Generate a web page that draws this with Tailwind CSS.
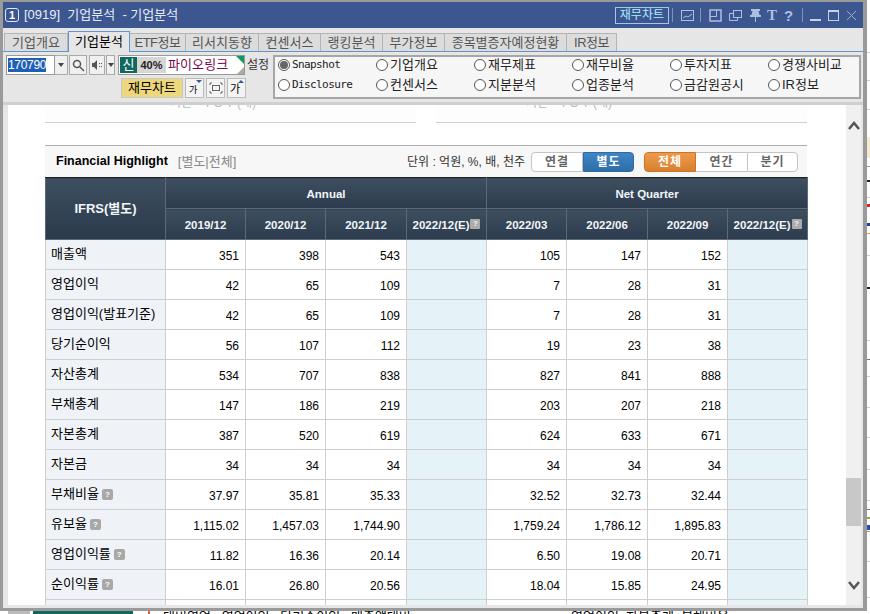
<!DOCTYPE html>
<html lang="ko">
<head>
    <meta charset="UTF-8">
    <title>기업분석</title>
    <script src="https://cdn.jsdelivr.net/npm/@tailwindcss/browser@4"></script>
</head>
<body class="relative w-[870px] h-[614px] overflow-hidden bg-white font-['Liberation_Sans','Noto_Sans_CJK_KR',sans-serif] text-[12px] text-black">
    <!-- bits of the desktop behind the window -->
    <div class="absolute left-[867px] top-0 w-[3px] h-[611px]">
        <span class="absolute left-0 top-[52px] w-[3px] h-px bg-[#ccc]"></span>
        <span class="absolute left-0 top-[80px] w-[3px] h-px bg-[#ccc]"></span>
        <span class="absolute left-0 top-[109px] w-[3px] h-px bg-[#ccc]"></span>
        <span class="absolute left-0 top-[137px] w-[3px] h-[21px] bg-[#f8e8d0]"></span>
        <span class="absolute left-0 top-[166px] w-[3px] h-px bg-[#999]"></span>
        <span class="absolute left-0 top-[180px] w-[3px] h-[2px] bg-[#222]"></span>
        <span class="absolute left-0 top-[197px] w-[3px] h-px bg-[#ccc]"></span>
        <span class="absolute left-0 top-[204px] w-[3px] h-[3px] bg-[#e02020]"></span>
        <span class="absolute left-0 top-[223px] w-[3px] h-[3px] bg-[#2040a0]"></span>
        <span class="absolute left-0 top-[233px] w-[3px] h-px bg-[#e8a020]"></span>
        <span class="absolute left-0 top-[255px] w-[3px] h-px bg-[#ccc]"></span>
        <span class="absolute left-0 top-[287px] w-[3px] h-[2px] bg-[#222]"></span>
        <span class="absolute left-0 top-[340px] w-[3px] h-px bg-[#ccc]"></span>
        <span class="absolute left-0 top-[359px] w-[3px] h-px bg-[#777]"></span>
        <span class="absolute left-0 top-[376px] w-[3px] h-px bg-[#ccc]"></span>
        <span class="absolute left-0 top-[407px] w-[3px] h-px bg-[#ccc]"></span>
        <span class="absolute left-0 top-[437px] w-[3px] h-px bg-[#ccc]"></span>
        <span class="absolute left-0 top-[469px] w-[3px] h-px bg-[#ccc]"></span>
        <span class="absolute left-0 top-[500px] w-[3px] h-px bg-[#ccc]"></span>
        <span class="absolute left-0 top-[509px] w-[3px] h-px bg-[#777]"></span>
        <span class="absolute left-0 top-[517px] w-[3px] h-[2px] bg-[#8fb020]"></span>
        <span class="absolute left-0 top-[525px] w-[3px] h-[5px] bg-[#2050b0]"></span>
        <span class="absolute left-0 top-[531px] w-[3px] h-px bg-[#999]"></span>
        <span class="absolute left-0 top-[561px] w-[3px] h-px bg-[#ccc]"></span>
        <span class="absolute left-0 top-[597px] w-[3px] h-px bg-[#ccc]"></span>
    </div>
    <div class="absolute left-0 top-[611px] w-[870px] h-[3px] overflow-hidden">
        <span class="absolute left-[8px] top-0 w-[22px] h-[3px] bg-[#bbb]"></span>
        <span class="absolute left-[33px] top-0 w-[100px] h-[3px] bg-[#11685f]"></span>
        <span class="absolute left-[148px] top-0 w-[2px] h-[3px] bg-[#e8602c]"></span>
        <span class="absolute left-[163px] -top-[1px] text-[13px] leading-[13px] whitespace-nowrap">대비영업 &nbsp; 영업이익 &nbsp; 당기순이익 &nbsp; 매출액대비</span>
        <span class="absolute left-[571px] -top-[1px] text-[13px] leading-[13px] whitespace-nowrap">영업이익 &nbsp;자본총계 &nbsp;부채비율</span>
    </div>

    <!-- window -->
    <div class="relative z-10 w-[867px] h-[611px] border-[3px] border-t-[2px] border-r-[4px] border-[#9a9a9a] flex flex-col bg-[#e6e6e6] overflow-hidden">
        <!-- title bar -->
        <div class="h-[26px] shrink-0 bg-[#3c5690] flex items-center pl-[2px] pr-[4px] text-white">
            <span class="w-[14px] h-[14px] rounded-[3px] border border-[#dfe6f5] text-[11px] leading-[12px] font-bold text-center">1</span>
            <span class="ml-[5px] text-[13px] text-[#e8edf8]">[0919]&nbsp; 기업분석 &nbsp;-&nbsp;기업분석</span>
            <div class="ml-auto flex items-center text-[#aebfdf]">
                <span class="h-[17px] px-[4px] border border-[#a9c4e4] text-[#a9f0ff] text-[12px] leading-[15px]">재무차트</span>
                <span class="ml-[3px] w-px h-[14px] bg-[#7f92ba]"></span>
                <svg class="ml-[8px]" width="13" height="13" viewBox="0 0 13 13" fill="none" stroke="currentColor"><rect x="0.500" y="1.500" width="12" height="10"/><path d="M2 9l3-2 2 1 4-3"/></svg>
                <span class="ml-[6px] w-px h-[14px] bg-[#7f92ba]"></span>
                <svg class="ml-[8px]" width="13" height="13" viewBox="0 0 13 13" fill="none" stroke="currentColor"><rect x="1" y="1" width="11" height="11" stroke-width="1.500"/><path d="M1 7.500h6.500V1"/></svg>
                <svg class="ml-[7px]" width="13" height="13" viewBox="0 0 13 13" fill="none" stroke="currentColor"><rect x="4.500" y="1.500" width="8" height="7"/><path d="M4 4.500H.5v7h8V9"/></svg>
                <svg class="ml-[7px]" width="13" height="14" viewBox="0 0 13 14" fill="currentColor"><path d="M2 1h9v2H9.500l1 4H12v2H7v5H6V9H1V7h1.500l1-4H2z"/></svg>
                <span class="ml-[5px] w-[11px] text-[15px] leading-[15px] font-bold font-['Liberation_Serif',serif]">T</span>
                <span class="ml-[6px] w-[10px] text-[15px] leading-[15px] font-bold">?</span>
                <span class="ml-[8px] w-px h-[14px] bg-[#7f92ba]"></span>
                <span class="ml-[7px] mt-[10px] w-[11px] h-[2px] bg-[#c6d2ea]"></span>
                <span class="ml-[7px] w-[11px] h-[11px] border border-t-[2px] border-[#c6d2ea]"></span>
                <svg class="ml-[8px] mr-[3px]" width="9" height="9" viewBox="0 0 9 9" stroke="#9db0d4"><path d="M0 0l9 9M9 0l-9 9"/></svg>
            </div>
        </div>

        <!-- tabs -->
        <div class="h-[24px] shrink-0 pt-[5px] flex pl-[1px] border-b border-[#5f96d0] text-[#555] text-[13px]">
            <span class="w-[64px] border border-b-0 border-[#b4b4b4] bg-[#dcdcdc] text-center leading-[17px]">기업개요</span>
            <span class="w-[62px] -mt-[2px] h-[21px] border border-b-0 border-[#5f96d0] bg-[#e6e6e6] text-black text-center leading-[20px] z-10">기업분석</span>
            <span class="w-[56px] border border-b-0 border-l-0 border-[#b4b4b4] bg-[#dcdcdc] text-center leading-[17px] tracking-[-0.5px]">ETF정보</span>
            <span class="w-[73px] border border-b-0 border-l-0 border-[#b4b4b4] bg-[#dcdcdc] text-center leading-[17px]">리서치동향</span>
            <span class="w-[62px] border border-b-0 border-l-0 border-[#b4b4b4] bg-[#dcdcdc] text-center leading-[17px]">컨센서스</span>
            <span class="w-[62px] border border-b-0 border-l-0 border-[#b4b4b4] bg-[#dcdcdc] text-center leading-[17px]">랭킹분석</span>
            <span class="w-[62px] border border-b-0 border-l-0 border-[#b4b4b4] bg-[#dcdcdc] text-center leading-[17px]">부가정보</span>
            <span class="w-[122px] border border-b-0 border-l-0 border-[#b4b4b4] bg-[#dcdcdc] text-center leading-[17px]">종목별증자예정현황</span>
            <span class="w-[50px] border border-b-0 border-l-0 border-[#b4b4b4] bg-[#dcdcdc] text-center leading-[17px] tracking-[-0.5px]">IR정보</span>
        </div>

        <!-- toolbar -->
        <div class="h-[53px] shrink-0 flex pl-[3px] pt-[3px] border-b-[3px] border-[#cfcfcf]">
            <div class="w-[264px] shrink-0">
                <div class="flex items-center h-[20px]">
                    <div class="w-[49px] h-[20px] bg-white border border-[#999] flex items-center pl-px"><span class="bg-[#1f5fb8] text-white leading-[14px] tracking-[-0.3px]">170790</span></div>
                    <span class="w-[13px] h-[20px] border border-l-0 border-[#aaa] bg-[#f0f0f0] flex items-center justify-center"><span class="border-x-[3px] border-t-[4px] border-x-transparent border-t-[#444]"></span></span>
                    <span class="ml-px w-[18px] h-[20px] border border-[#aaa] bg-[#f0f0f0] flex items-center justify-center">
                        <svg width="13" height="13" viewBox="0 0 13 13" fill="none" stroke="#555" stroke-width="1.500"><circle cx="5" cy="5" r="3.500"/><path d="M8 8l4 4"/></svg>
                    </span>
                    <span class="ml-[2px] w-[16px] h-[20px] border border-[#aaa] bg-[#f0f0f0] flex items-center justify-center">
                        <svg width="12" height="12" viewBox="0 0 12 12" fill="#555"><path d="M1 4h2l3-3v10L3 8H1z"/><path d="M8 4h1v1H8zM10 4h1v1h-1zM8 7h1v1H8zM10 7h1v1h-1z"/></svg>
                    </span>
                    <span class="ml-px w-[9px] h-[20px] border border-[#aaa] bg-[#f0f0f0] flex items-center justify-center"><span class="border-x-[3px] border-t-[4px] border-x-transparent border-t-[#444]"></span></span>
                    <div class="ml-[3px] w-[127px] h-[20px] border border-[#999] bg-white flex items-center relative">
                        <span class="w-[17px] h-[16px] ml-px bg-[#11685f] text-white text-center text-[13px] leading-[15px]">신</span>
                        <span class="w-[29px] h-[16px] bg-[#d6d6d6] text-center leading-[16px] font-bold text-[11px] text-[#222]">40%</span>
                        <span class="ml-[2px] text-[13px] text-[#7a0a4e] tracking-[0.1px]">파이오링크</span>
                        <span class="absolute right-0 top-0 border-l-[8px] border-t-[8px] border-l-transparent border-t-[#0c9c5a]"></span>
                        <span class="absolute right-0 bottom-0 border-l-[7px] border-b-[7px] border-l-transparent border-b-[#aaa]"></span>
                    </div>
                    <span class="ml-[2px] text-[#333] whitespace-nowrap">설정</span>
                </div>
                <div class="flex items-center h-[20px] mt-[3px] pl-[115px]">
                    <span class="w-[62px] h-[20px] bg-[#ecd77c] border border-[#c8c8c8] text-center text-[13px] leading-[18px]">재무차트</span>
                    <span class="ml-[2px] w-[19px] h-[20px] border border-[#bbb] bg-[#f4f4f4] relative text-[9px] leading-[22px] pl-[3px]">가<span class="absolute right-px top-px border-x-[3px] border-t-[3px] border-x-transparent border-t-[#3c5690]"></span></span>
                    <span class="ml-[2px] w-[19px] h-[20px] border border-[#bbb] bg-[#f4f4f4] flex items-center justify-center">
                        <svg width="14" height="12" viewBox="0 0 14 12" fill="none" stroke="#666"><path d="M1 3V1h2M11 1h2v2M13 9v2h-2M3 11H1V9"/><rect x="3.500" y="3.500" width="7" height="5"/></svg>
                    </span>
                    <span class="ml-[2px] w-[19px] h-[20px] border border-[#bbb] bg-[#f4f4f4] relative text-[11px] leading-[20px] pl-[2px]">가<span class="absolute right-px top-px border-x-[3px] border-b-[3px] border-x-transparent border-b-[#3c5690]"></span></span>
                </div>
            </div>
            <!-- radio panel -->
            <div class="w-[588px] h-[44px] ml-[3px] border-2 border-[#a6a6a6] bg-[#f6f6f6] grid grid-cols-[98px_98px_98px_98px_98px_1fr] grid-rows-[16px_16px] gap-y-[4px] pl-[3px] text-[13px] text-[#222]">
                <label class="flex items-center"><span class="shrink-0 w-[12px] h-[12px] rounded-full border border-[#555] bg-white flex items-center justify-center"><span class="w-[8px] h-[8px] rounded-full bg-[#666]"></span></span><span class="ml-[2px] font-['DejaVu_Sans_Mono',monospace] text-[11px] tracking-[-0.6px]">Snapshot</span></label>
                <label class="flex items-center"><span class="shrink-0 w-[12px] h-[12px] rounded-full border border-[#555] bg-white"></span><span class="ml-[2px]">기업개요</span></label>
                <label class="flex items-center"><span class="shrink-0 w-[12px] h-[12px] rounded-full border border-[#555] bg-white"></span><span class="ml-[2px]">재무제표</span></label>
                <label class="flex items-center"><span class="shrink-0 w-[12px] h-[12px] rounded-full border border-[#555] bg-white"></span><span class="ml-[2px]">재무비율</span></label>
                <label class="flex items-center"><span class="shrink-0 w-[12px] h-[12px] rounded-full border border-[#555] bg-white"></span><span class="ml-[2px]">투자지표</span></label>
                <label class="flex items-center"><span class="shrink-0 w-[12px] h-[12px] rounded-full border border-[#555] bg-white"></span><span class="ml-[2px]">경쟁사비교</span></label>
                <label class="flex items-center"><span class="shrink-0 w-[12px] h-[12px] rounded-full border border-[#555] bg-white"></span><span class="ml-[2px] font-['DejaVu_Sans_Mono',monospace] text-[11px] tracking-[-0.6px]">Disclosure</span></label>
                <label class="flex items-center"><span class="shrink-0 w-[12px] h-[12px] rounded-full border border-[#555] bg-white"></span><span class="ml-[2px]">컨센서스</span></label>
                <label class="flex items-center"><span class="shrink-0 w-[12px] h-[12px] rounded-full border border-[#555] bg-white"></span><span class="ml-[2px]">지분분석</span></label>
                <label class="flex items-center"><span class="shrink-0 w-[12px] h-[12px] rounded-full border border-[#555] bg-white"></span><span class="ml-[2px]">업종분석</span></label>
                <label class="flex items-center"><span class="shrink-0 w-[12px] h-[12px] rounded-full border border-[#555] bg-white"></span><span class="ml-[2px]">금감원공시</span></label>
                <label class="flex items-center"><span class="shrink-0 w-[12px] h-[12px] rounded-full border border-[#555] bg-white"></span><span class="ml-[2px]">IR정보</span></label>
            </div>
        </div>

        <!-- content + scrollbar -->
        <div class="flex-1 min-h-0 flex pl-[5px] pr-[2px] pb-[3px] overflow-hidden">
            <div class="flex-1 min-w-0 bg-white overflow-hidden pl-[37px]">
                <!-- tail of previous tables -->
                <div class="flex w-[762px] h-[18px]">
                    <div class="w-[371px] h-[18px] border-b border-[#d0d0d0] bg-[#fdfdfd] overflow-hidden pl-[125px] text-[#bbb] whitespace-nowrap"><span class="block -mt-[4px] leading-[4px]">기간 &nbsp;- FO Y (배)</span></div>
                    <div class="ml-[20px] flex-1 h-[18px] border-b border-[#d0d0d0] bg-[#fdfdfd] overflow-hidden pl-[90px] text-[#bbb] whitespace-nowrap"><span class="block -mt-[4px] leading-[4px]">기간 &nbsp;- FO Y (배)</span></div>
                </div>
                <!-- heading -->
                <div class="w-[762px] h-[32px] mt-[22px] border-t border-[#b0b0b0] bg-[#f7f7f7] flex items-center pl-[11px] pr-[9px]">
                    <span class="font-bold text-[12.5px]">Financial Highlight</span>
                    <span class="ml-[10px] text-[13px] text-[#888]">[별도|전체]</span>
                    <span class="ml-auto text-[#333] text-[12px]">단위 : 억원, %, 배, 천주</span>
                    <div class="ml-[6px] flex h-[20px] text-[12px] font-bold leading-[18px] text-center tracking-[1px]">
                        <span class="w-[52px] bg-white border border-[#c4c4c4] rounded-l-[4px] text-[#666]">연결</span>
                        <span class="w-[51px] bg-linear-to-b from-[#3f85c6] to-[#2f6ea8] border border-[#2f6aa4] rounded-r-[4px] text-white">별도</span>
                    </div>
                    <div class="ml-[10px] flex h-[20px] text-[12px] font-bold leading-[18px] text-center tracking-[1px]">
                        <span class="w-[52px] bg-linear-to-b from-[#ee9a4a] to-[#d9802f] border border-[#c87526] rounded-l-[4px] text-white">전체</span>
                        <span class="w-[51px] bg-white border-y border-[#c4c4c4] text-[#666]">연간</span>
                        <span class="w-[51px] bg-white border border-[#c4c4c4] rounded-r-[4px] text-[#666]">분기</span>
                    </div>
                </div>
                <!-- table -->
                <table class="w-[762px] table-fixed border-collapse text-right text-[12px]">
                    <colgroup>
                        <col class="w-[120px]"><col class="w-[80px]"><col class="w-[80px]"><col class="w-[81px]"><col class="w-[80px]"><col class="w-[80px]"><col class="w-[81px]"><col class="w-[80px]"><col class="w-[80px]">
                    </colgroup>
                    <thead class="text-[#f2f6fa] text-center font-bold text-[11.5px]">
                        <tr class="h-[31px]">
                            <th rowspan="2" class="border border-[#5d6976] border-t-[#222] text-[13px] bg-linear-to-b from-[#3e4f60] to-[#2a3a4c]">IFRS(별도)</th>
                            <th colspan="4" class="pt-[4px] border border-[#5d6976] border-t-[#222] font-bold bg-linear-to-b from-[#3e4f60] to-[#2c3c4e]">Annual</th>
                            <th colspan="4" class="pt-[4px] border border-[#5d6976] border-t-[#222] font-bold bg-linear-to-b from-[#3e4f60] to-[#2c3c4e]">Net Quarter</th>
                        </tr>
                        <tr class="h-[31px]">
                            <th class="pt-[4px] border border-[#5d6976] font-bold bg-linear-to-b from-[#3e4f60] to-[#2c3c4e]">2019/12</th>
                            <th class="pt-[4px] border border-[#5d6976] font-bold bg-linear-to-b from-[#3e4f60] to-[#2c3c4e]">2020/12</th>
                            <th class="pt-[4px] border border-[#5d6976] font-bold bg-linear-to-b from-[#3e4f60] to-[#2c3c4e]">2021/12</th>
                            <th class="pt-[4px] border border-[#5d6976] font-bold whitespace-nowrap bg-linear-to-b from-[#3e4f60] to-[#2c3c4e]">2022/12(E)<span class="inline-block align-[3px] w-[10px] h-[10px] ml-px rounded-[1px] bg-[#aaa] text-[8px] leading-[10px]">?</span></th>
                            <th class="pt-[4px] border border-[#5d6976] font-bold bg-linear-to-b from-[#3e4f60] to-[#2c3c4e]">2022/03</th>
                            <th class="pt-[4px] border border-[#5d6976] font-bold bg-linear-to-b from-[#3e4f60] to-[#2c3c4e]">2022/06</th>
                            <th class="pt-[4px] border border-[#5d6976] font-bold bg-linear-to-b from-[#3e4f60] to-[#2c3c4e]">2022/09</th>
                            <th class="pt-[4px] border border-[#5d6976] font-bold whitespace-nowrap bg-linear-to-b from-[#3e4f60] to-[#2c3c4e]">2022/12(E)<span class="inline-block align-[3px] w-[10px] h-[10px] ml-px rounded-[1px] bg-[#aaa] text-[8px] leading-[10px]">?</span></th>
                        </tr>
                    </thead>
                    <tbody id="rows"></tbody>
                </table>
            </div>
            <!-- scrollbar -->
            <div class="w-[15px] shrink-0 bg-[#f0f0f0] relative">
                <svg class="absolute left-[2px] top-[16px]" width="12" height="9" viewBox="0 0 12 9" fill="none" stroke="#555" stroke-width="2.500"><path d="M1 8l5-6 5 6"/></svg>
                <div class="absolute left-0 top-[373px] w-[15px] h-[48px] bg-[#c8c8c8]"></div>
                <svg class="absolute left-[2px] top-[476px]" width="12" height="9" viewBox="0 0 12 9" fill="none" stroke="#555" stroke-width="2.500"><path d="M1 1l5 6 5-6"/></svg>
            </div>
        </div>
    </div>
    <script>
        // rows are plain data, classes stay literal
        var data = [
            ["매출액",0,"351","398","543","105","147","152"],
            ["영업이익",0,"42","65","109","7","28","31"],
            ["영업이익(발표기준)",0,"42","65","109","7","28","31"],
            ["당기순이익",0,"56","107","112","19","23","38"],
            ["자산총계",0,"534","707","838","827","841","888"],
            ["부채총계",0,"147","186","219","203","207","218"],
            ["자본총계",0,"387","520","619","624","633","671"],
            ["자본금",0,"34","34","34","34","34","34"],
            ["부채비율",1,"37.97","35.81","35.33","32.52","32.73","32.44"],
            ["유보율",1,"1,115.02","1,457.03","1,744.90","1,759.24","1,786.12","1,895.83"],
            ["영업이익률",1,"11.82","16.36","20.14","6.50","19.08","20.71"],
            ["순이익률",1,"16.01","26.80","20.56","18.04","15.85","24.95"],
            ["",0,"","","","","",""]
        ];
        var td = '<td class="h-[30px] border border-[#cfcfcf] pr-[6px] pt-[2px]">';
        var est = '<td class="h-[30px] border border-[#cfcfcf] bg-[#e5f3f9]"></td>';
        var tip = '<span class="inline-block ml-[3px] w-[11px] h-[11px] rounded-[2px] bg-[#a8a8a8] text-white text-[8px] leading-[11px] text-center font-bold align-[1px]">?</span>';
        document.getElementById("rows").innerHTML = data.map(function (r) {
            return '<tr><th class="h-[30px] border border-[#cfcfcf] bg-[#eff3f8] pl-[5px] text-left text-[13px] font-normal pb-[2px] whitespace-nowrap">' + r[0] + (r[1] ? tip : '') + '</th>'
                + td + r[2] + '</td>' + td + r[3] + '</td>' + td + r[4] + '</td>' + est
                + td + r[5] + '</td>' + td + r[6] + '</td>' + td + r[7] + '</td>' + est + '</tr>';
        }).join("");
    </script>
</body>
</html>
